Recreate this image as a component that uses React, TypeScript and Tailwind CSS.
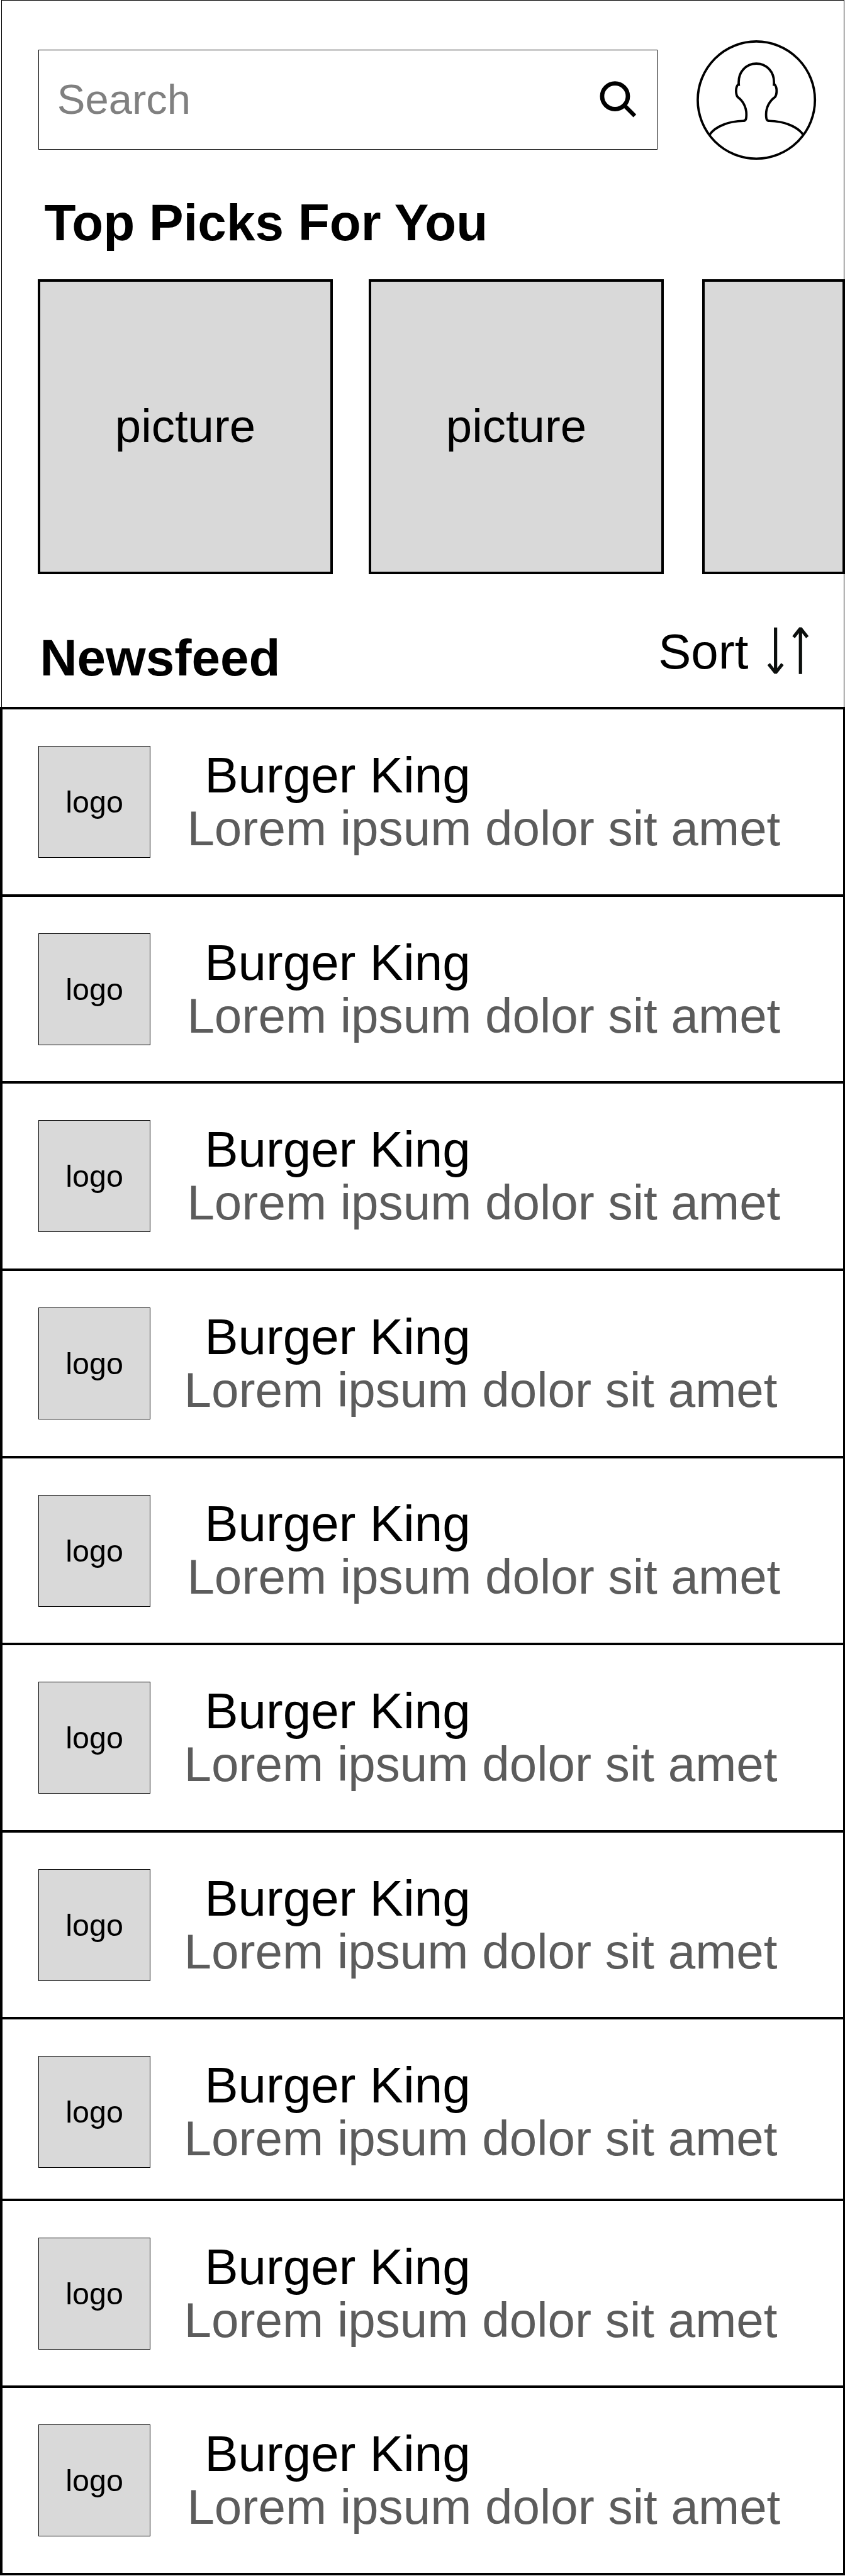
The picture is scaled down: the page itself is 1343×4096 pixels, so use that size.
const rows = [
  { shifted: false, short: false },
  { shifted: false, short: false },
  { shifted: false, short: false },
  { shifted: true, short: false },
  { shifted: false, short: false },
  { shifted: true, short: false },
  { shifted: true, short: false },
  { shifted: true, short: true },
  { shifted: true, short: false },
  { shifted: false, short: false },
];

function SearchIcon() {
  return (
    <svg viewBox="190 410 196 196" className="mt-[-2px] h-[60.8px] w-[60.8px]" fill="none" stroke="#000">
      <circle cx="272" cy="494" r="66" strokeWidth="22" />
      <path d="M318 539 L373.5 594.5" strokeWidth="21" />
    </svg>
  );
}

function Avatar() {
  return (
    <svg viewBox="688 202 620 620" className="h-[192.2px] w-[192.2px] shrink-0" fill="none" stroke="#000" strokeWidth="12">
      <circle cx="998" cy="512" r="300.5" />
      <path d="M758 690 C788 645 860 620 930 619 C944 619 947 610 947 585 C947 550 930 516 903 497 C892 485 890 448 904 433 L908 433 C902 368 946 325 998 325 C1050 325 1094 368 1088 433 L1092 433 C1106 448 1104 485 1093 497 C1066 516 1048 550 1048 585 C1048 610 1051 619 1065 619 C1135 620 1208 645 1238 690" />
    </svg>
  );
}

function SortArrows() {
  return (
    <svg viewBox="1308 1070 76 88" className="mt-[-1px] h-[81.8px] w-[70.7px]" fill="none" stroke="#0c0f0d" strokeWidth="5.6">
      <path d="M1324.8 1074 V1151 M1313 1136.5 L1324.8 1151.5 L1336.6 1136.5" strokeLinejoin="bevel" />
      <path d="M1367.4 1153.7 V1076 M1355.6 1090.6 L1367.4 1075.6 L1379.2 1090.6" strokeLinejoin="bevel" />
    </svg>
  );
}

function Picture({ label }: { label: string }) {
  return (
    <div className="flex h-[469px] w-[469px] shrink-0 items-center justify-center border-4 border-black bg-[#d9d9d9] text-[74.4px] leading-[84px]">
      {label}
    </div>
  );
}

function FeedRow({ shifted, short }: { shifted: boolean; short: boolean }) {
  return (
    <li className={`flex border-t-4 border-black pl-[57.3px] ${short ? "h-[288.3px]" : "h-[297.63px]"}`}>
      <div className="mt-[58px] flex h-[178px] w-[177.6px] shrink-0 items-center justify-center border border-black bg-[#d9d9d9] text-[48.4px] leading-[54px]">
        logo
      </div>
      <div className={`whitespace-nowrap pt-[64.9px] ${shifted ? "pl-[53.7px]" : "pl-[58.5px]"}`}>
        <div className={`text-[80px] leading-[80px] ${shifted ? "pl-[32.6px]" : "pl-[27.8px]"}`}>Burger King</div>
        <div className="text-[78.2px] leading-[89px] text-[#5c5c5c]">Lorem ipsum dolor sit amet</div>
      </div>
    </li>
  );
}

export default function App() {
  return (
    <div className="h-[4096px] w-[1343px] overflow-hidden bg-white font-['Liberation_Sans',Arial,sans-serif] text-black">
      <div className="ml-[2px] mr-px h-[1124px] border-x border-t border-black">
        <header className="flex pl-[58.4px] pt-[61.6px]">
          <div className="mt-[16.4px] flex h-[159px] w-[983.3px] items-center justify-between border border-black pl-[28.3px] pr-[30.9px]">
            <span className="text-[67px] leading-[76px] text-[#808080]">Search</span>
            <SearchIcon />
          </div>
          <div className="ml-[61.5px]">
            <Avatar />
          </div>
        </header>
        <h2 className="mt-[58px] pl-[67.4px] text-[81.85px] font-bold leading-[82px]">Top Picks For You</h2>
        <div className="mr-[-2px] mt-[49px] flex pl-[57px]">
          <Picture label="picture" />
          <div className="ml-[57px] flex">
            <Picture label="picture" />
          </div>
          <div className="ml-[61px] h-[469px] flex-1 border-4 border-black bg-[#d9d9d9]" />
        </div>
        <div className="flex items-start justify-between pl-[60.4px] pr-[53.8px] pt-[82.5px]">
          <h2 className="mt-[10.2px] text-[81.85px] font-bold leading-[82px]">Newsfeed</h2>
          <div className="flex items-start">
            <span className="text-[78.13px] leading-[82px]">Sort</span>
            <div className="ml-[27px]">
              <SortArrows />
            </div>
          </div>
        </div>
      </div>
      <ul className="h-[2971px] border-b-4 border-l-4 border-r-[3px] border-black">
        {rows.map((row, i) => (
          <FeedRow key={i} shifted={row.shifted} short={row.short} />
        ))}
      </ul>
    </div>
  );
}
